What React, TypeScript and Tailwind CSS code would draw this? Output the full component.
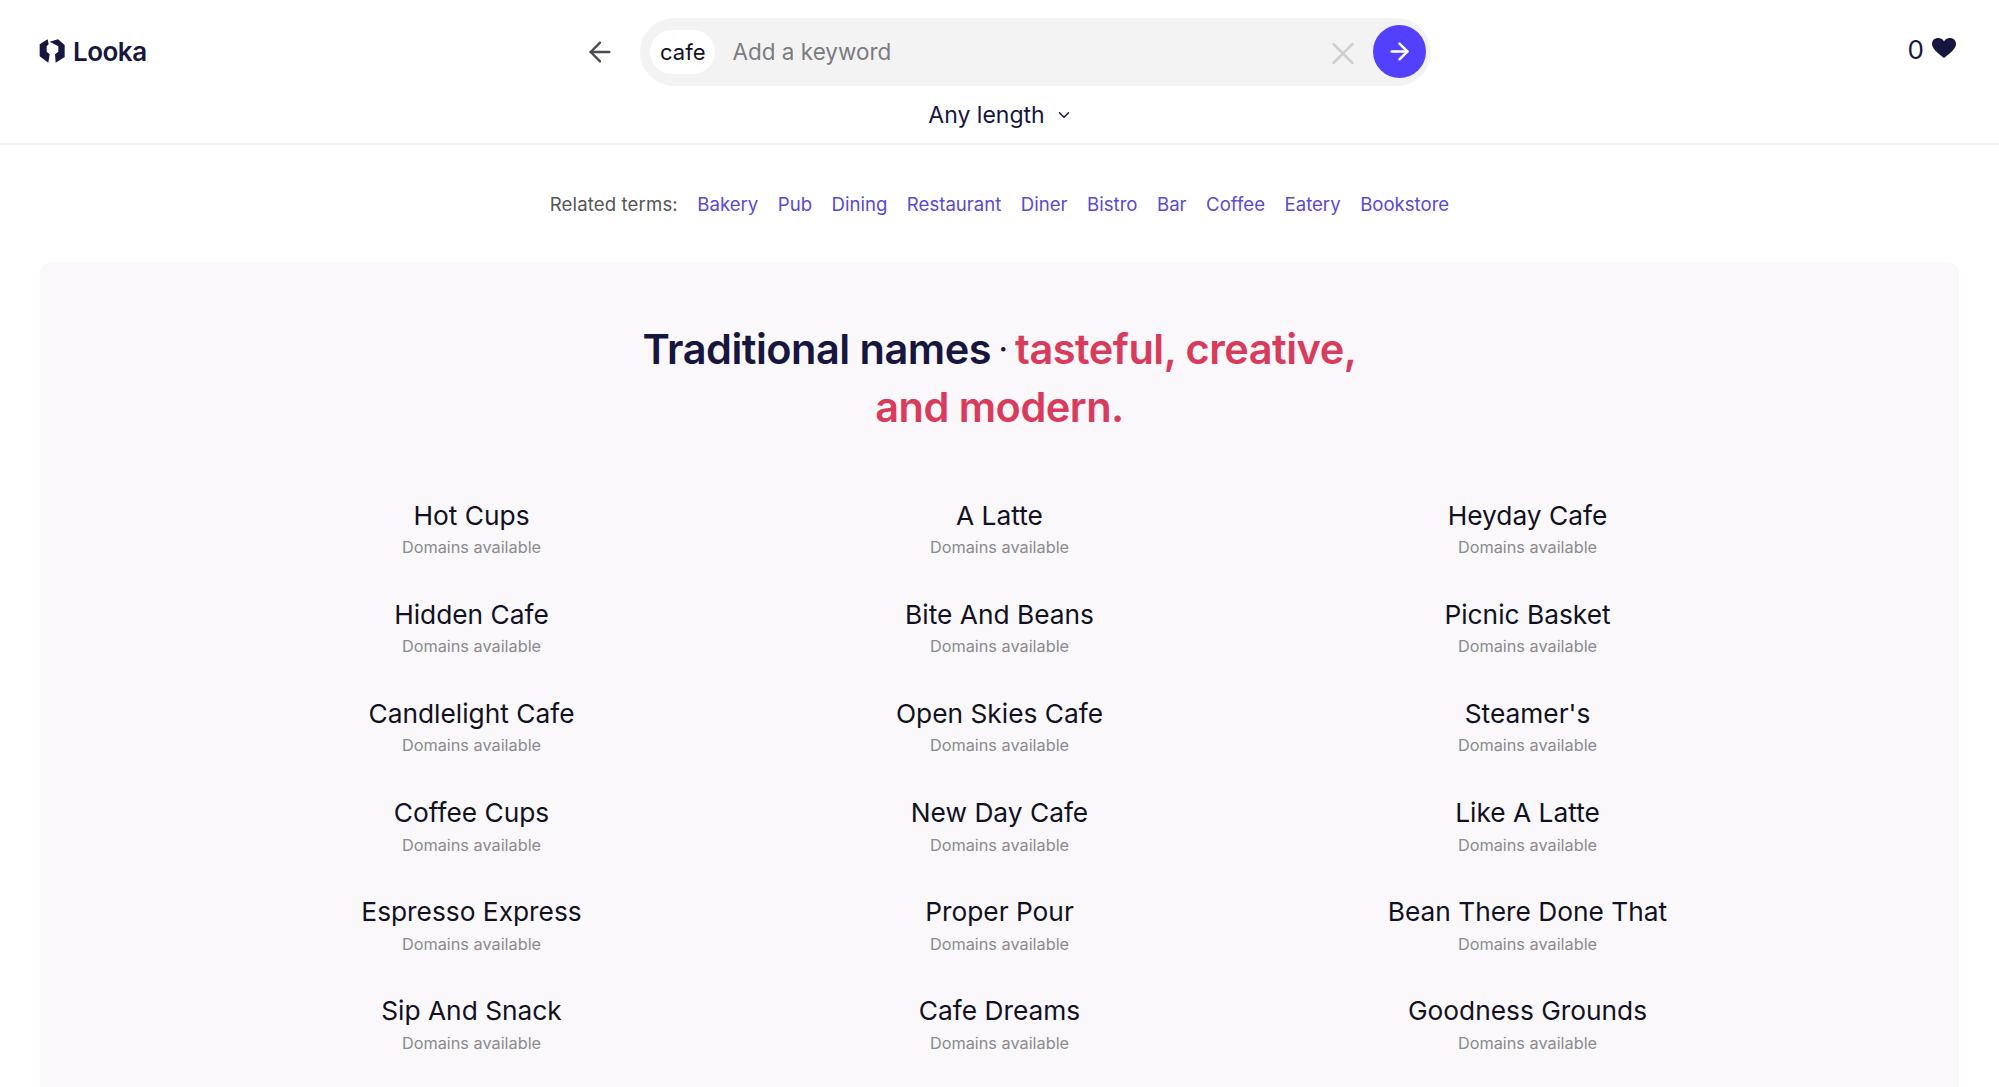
import { ArrowLeft, ArrowRight, ChevronDown, X } from "lucide-react";

const RELATED = ["Bakery", "Pub", "Dining", "Restaurant", "Diner", "Bistro", "Bar", "Coffee", "Eatery", "Bookstore"];

const NAMES = [
  ["Hot Cups", "A Latte", "Heyday Cafe"],
  ["Hidden Cafe", "Bite And Beans", "Picnic Basket"],
  ["Candlelight Cafe", "Open Skies Cafe", "Steamer's"],
  ["Coffee Cups", "New Day Cafe", "Like A Latte"],
  ["Espresso Express", "Proper Pour", "Bean There Done That"],
  ["Sip And Snack", "Cafe Dreams", "Goodness Grounds"],
];

function LogoMark() {
  return (
    <svg viewBox="28 28 78 72" className="h-6 w-[26px] fill-[#16163f]">
      <path d="M54 29 L30 44 V80 L56 99 L60 74 L51 66 V50 L57 44 Z" />
      <path d="M60 36 L85 29 L105 46 V82 L78 99 L76 74 L86 66 V50 Z" />
    </svg>
  );
}

function Header() {
  return (
    <header className="h-[145px] border-b-2 border-[#f3f3f4] bg-white">
      <div className="flex h-[104px] items-center pl-[39px] pr-[43px]">
        <div className="flex w-[545px] shrink-0 -translate-y-px items-center gap-2">
          <LogoMark />
          <span className="text-[26px] font-semibold tracking-[-0.5px] text-[#16163f]">Looka</span>
        </div>
        <ArrowLeft className="size-8 text-[#4a4a55]" strokeWidth={1.8} />
        <div className="ml-6 flex h-[68px] w-[791px] items-center rounded-full bg-[#f3f3f4] pl-[10px] pr-[5px]">
          <span className="flex h-[44px] items-center rounded-full bg-white px-[10px] text-[22px] text-[#111122]">cafe</span>
          <span className="ml-[17px] text-[22.5px] text-[#7b7b80]">Add a keyword</span>
          <X className="ml-auto size-[38px] translate-y-[1.5px] text-[#cfcfcf]" strokeWidth={1.6} />
          <span className="ml-[11px] flex size-[53px] -translate-y-px items-center justify-center rounded-full bg-[#5340ff]">
            <ArrowRight className="size-[27px] text-white" strokeWidth={2.2} />
          </span>
        </div>
        <div className="ml-auto flex items-center gap-2">
          <span className="-translate-y-0.5 text-[26px] leading-none text-[#16163f]">0</span>
          <svg viewBox="0 0 24 20" className="h-5 w-6 -translate-y-1 fill-[#16163f]">
            <path d="M12 20 C6 15 0 11 0 6 C0 2 3 0 6 0 C9 0 11 1.5 12 3.5 C13 1.5 15 0 18 0 C21 0 24 2 24 6 C24 11 18 15 12 20 Z" />
          </svg>
        </div>
      </div>
      <div className="-mt-1.5 flex items-center justify-center gap-2 text-[23px] text-[#16163f]">
        <span>Any length</span>
        <ChevronDown className="size-[18px] translate-x-0.5" strokeWidth={2} />
      </div>
    </header>
  );
}

function RelatedTerms() {
  return (
    <div className="flex h-[117px] items-center justify-center gap-[19.5px] pt-[2px] text-[18.6px]">
      <span className="tracking-[0.12px] text-[#55555c]">Related terms:</span>
      {RELATED.map((term) => (
        <a key={term} className="text-[#5a49d6]">
          {term}
        </a>
      ))}
    </div>
  );
}

function NameCell({ name }: { name: string }) {
  return (
    <div className="flex h-[99.2px] flex-col items-center">
      <span className="text-[26.3px] leading-[36px] text-[#111122]">{name}</span>
      <span className="mt-[1.5px] text-[16.3px] leading-[24px] text-[#8a8a90]">Domains available</span>
    </div>
  );
}

export default function App() {
  return (
    <div className="h-[1087px] overflow-hidden bg-white font-['Inter',sans-serif]">
      <Header />
      <RelatedTerms />
      <main className="mx-10 h-[825px] rounded-t-xl bg-[#faf8fa] pt-[58px]">
        <h1 className="text-center text-[41.5px] leading-[58px] font-semibold tracking-[-0.5px] text-[#d93b5c]">
          <span className="flex items-center justify-center">
            <span className="text-[#16163f]">Traditional names</span>
            <span className="w-6 text-center text-[28px] leading-none text-[#16163f]">·</span>
            <span>tasteful, creative,</span>
          </span>
          <span className="block">and modern.</span>
        </h1>
        <div className="mx-auto mt-[61.5px] grid w-[1584px] grid-cols-3">
          {NAMES.flat().map((name) => (
            <NameCell key={name} name={name} />
          ))}
        </div>
      </main>
    </div>
  );
}
